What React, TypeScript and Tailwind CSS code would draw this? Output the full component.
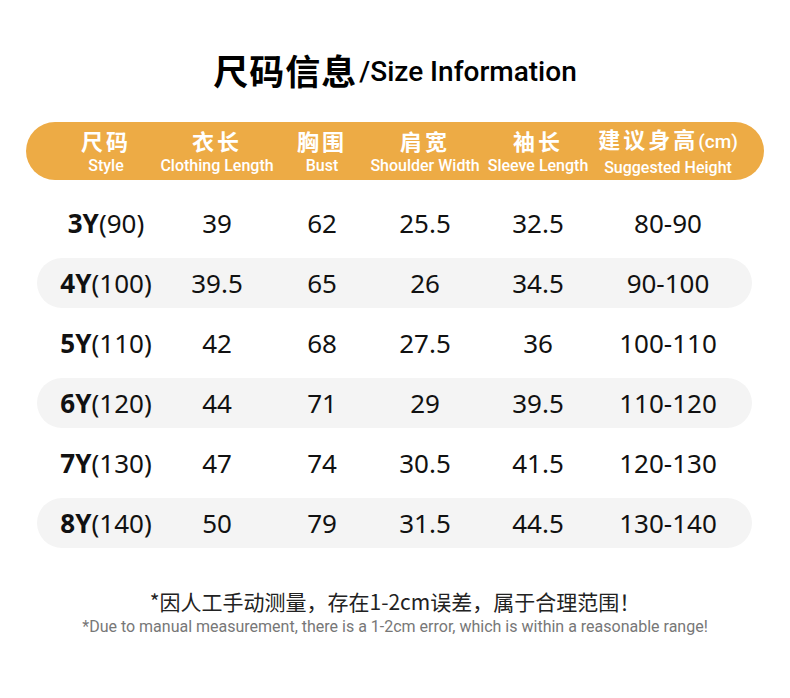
import React from "react";

const cols = "grid grid-cols-[112px_110px_100px_106px_120px_140px] items-center";

const headers: [string, string, string?][] = [
  ["尺码", "Style"],
  ["衣长", "Clothing Length"],
  ["胸围", "Bust"],
  ["肩宽", "Shoulder Width"],
  ["袖长", "Sleeve Length"],
  ["建议身高", "Suggested Height", "(cm)"],
];

const rows: [string, string, string, string, string, string, string][] = [
  ["3Y", "(90)", "39", "62", "25.5", "32.5", "80-90"],
  ["4Y", "(100)", "39.5", "65", "26", "34.5", "90-100"],
  ["5Y", "(110)", "42", "68", "27.5", "36", "100-110"],
  ["6Y", "(120)", "44", "71", "29", "39.5", "110-120"],
  ["7Y", "(130)", "47", "74", "30.5", "41.5", "120-130"],
  ["8Y", "(140)", "50", "79", "31.5", "44.5", "130-140"],
];

export default function App() {
  return (
    <div
      className="w-[790px] h-[698px] bg-white text-[#111] overflow-hidden"
      style={{ fontFamily: '"Noto Sans", "Noto Sans CJK SC", sans-serif' }}
    >
      <div className="h-[122px] flex items-start justify-center pt-[48px]">
        <div className="flex items-end">
          <span className="text-[35px] leading-[44px] font-bold tracking-[1px] text-black [font-family:'Noto_Sans_CJK_SC',sans-serif]">
            尺码信息
          </span>
          <span className="text-[28px] leading-[40px] font-medium text-black [font-family:Roboto,sans-serif] ml-[2px]">
            /Size Information
          </span>
        </div>
      </div>

      <div className="ml-[26px] w-[738px] h-[58px] rounded-full bg-[#EDAB45] pl-[24px] text-white">
        <div className={cols + " h-full"}>
          {headers.map(([cn, en, unit], i) => (
            <div key={i} className="flex flex-col items-center">
              <div className="text-[22px] leading-[26px] font-bold tracking-[3px] [font-family:'Noto_Sans_CJK_SC',sans-serif] whitespace-nowrap">
                {cn}
                {unit && <span className="text-[19px] tracking-normal font-medium [font-family:Roboto,sans-serif]">{unit}</span>}
              </div>
              <div className="text-[16px] leading-[18px] mt-[4px] font-medium [font-family:Roboto,sans-serif] whitespace-nowrap">
                {en}
              </div>
            </div>
          ))}
        </div>
      </div>

      <div className="mt-[18px] flex flex-col gap-[10px]">
        {rows.map((r, i) => (
          <div
            key={i}
            className={
              "ml-[37px] w-[715px] h-[50px] rounded-full pl-[13px] " +
              (i % 2 === 1 ? "bg-[#F4F4F4]" : "")
            }
          >
            <div className={cols + " h-full text-[26px]"}>
              <div className="text-center whitespace-nowrap">
                <span className="font-bold">{r[0]}</span>
                <span>{r[1]}</span>
              </div>
              {r.slice(2).map((v, j) => (
                <div key={j} className="text-center">
                  {v}
                </div>
              ))}
            </div>
          </div>
        ))}
      </div>

      <div className="mt-[40px] flex flex-col items-center">
        <div className="text-[21px] leading-[26px] text-[#222] [font-family:'Noto_Sans_CJK_SC',sans-serif]">
          *因人工手动测量，存在1-2cm误差，属于合理范围！
        </div>
        <div className="text-[16px] leading-[20px] text-[#777] [font-family:Roboto,sans-serif] mt-[3px]">
          *Due to manual measurement, there is a 1-2cm error, which is within a reasonable range!
        </div>
      </div>
    </div>
  );
}
